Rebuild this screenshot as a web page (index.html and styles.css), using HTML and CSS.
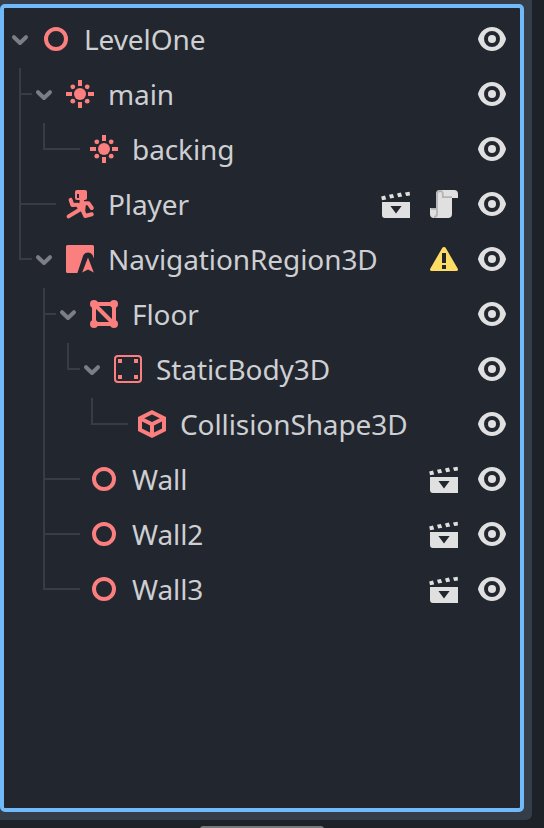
FILE: index.html
```html
<!DOCTYPE html>
<html lang="en">
<head>
<meta charset="utf-8">
<title>Scene</title>
<link rel="stylesheet" href="styles.css">
</head>
<body>
<svg class="defs" aria-hidden="true">
  <symbol id="arrow" viewBox="0 0 24 32"><path d="M6 14.2l6 5.8 6-5.8" fill="none" stroke="currentColor" stroke-width="4" stroke-linecap="round" stroke-linejoin="round"/></symbol>
  <symbol id="node" viewBox="0 0 16 16"><circle cx="8" cy="8" r="5" fill="none" stroke="currentColor" stroke-width="2"/></symbol>
  <symbol id="light" viewBox="0 0 16 16"><circle cx="8" cy="8" r="3"/><path d="M7 1h2v3H7zM7 12h2v3H7zM1 7h3v2H1zM12 7h3v2h-3z"/><circle cx="4.4" cy="4.400" r="1.200"/><circle cx="11.600" cy="4.400" r="1.200"/><circle cx="4.400" cy="11.600" r="1.200"/><circle cx="11.600" cy="11.600" r="1.200"/></symbol>
  <symbol id="character" viewBox="0 0 16 16"><path fill-rule="evenodd" d="M6.500 1h4a1 1 0 0 1 1 1v3a1 1 0 0 1-1 1h-4a1 1 0 0 1-1-1V2a1 1 0 0 1 1-1zM6.500 3v2h1V3z"/><path d="M3.300 5.900l.9 2.600 2.600-.1M9 7.600h3.200l1.700 2.400M8.200 10.600l-5.900 3.600M9.200 10.800l1.400 3.200 3.300-.9" fill="none" stroke="currentColor" stroke-width="2" stroke-linecap="round" stroke-linejoin="round"/><path d="M7.800 5.500h2.200v1.300l1 .8-.4 3.900-3.300-.5L6.200 9.300l1.600-2z"/></symbol>
  <symbol id="navigation" viewBox="0 0 16 16"><path d="M1.800 1h12.4a.8.8 0 0 1 .8.8v5.900l-.6-1.400C13.900 5.200 13 4.700 12 4.700s-1.900.5-2.400 1.600L6.700 15H1.800a.8.8 0 0 1-.8-.8V1.800A.8.8 0 0 1 1.800 1z"/><path d="M12 7.200l2.900 7.600L12 13.300l-2.900 1.500z"/></symbol>
  <symbol id="mesh" viewBox="0 0 16 16"><path d="M3 3h10v10H3zL13 13" fill="none" stroke="currentColor" stroke-width="2"/><circle cx="3" cy="3" r="2"/><circle cx="13" cy="3" r="2"/><circle cx="3" cy="13" r="2"/><circle cx="13" cy="13" r="2"/></symbol>
  <symbol id="body" viewBox="0 0 16 16"><rect x="1.5" y="1.5" width="13" height="13" rx="1.5" fill="none" stroke="currentColor"/><path d="M3 3h2v2H3zM11 3h2v2h-2zM3 11h2v2H3zM11 11h2v2h-2z"/></symbol>
  <symbol id="shape" viewBox="0 0 16 16"><path d="M8 2.100l6 3v5.800l-6 3-6-3V5.100zM2 5.100l6 3 6-3M8 8.100v5.800" fill="none" stroke="currentColor" stroke-width="2"/></symbol>
  <symbol id="eye" viewBox="0 0 16 16"><path fill-rule="evenodd" d="M8 2C4.900 2 2.100 4.200 1.100 7.500a1.500 1.500 0 0 0 0 1C2.100 11.800 4.900 14 8 14s5.900-2.200 6.900-5.500a1.500 1.500 0 0 0 0-1C13.900 4.200 11.100 2 8 2zM8 4a4 4 0 0 1 0 8 4 4 0 0 1 0-8z"/><circle cx="8" cy="8" r="2"/></symbol>
  <symbol id="scene" viewBox="0 0 16 16"><path fill-rule="evenodd" d="M1 7h14v8H2.500A1.500 1.500 0 0 1 1 13.500zM5.200 9L8 12.800 10.800 9z"/><path d="M.6 4.200l1.900-.4.600 1.900-2.100.4zM4.500 3.400l1.900-.4.700 1.900-2 .4zM8.500 2.700l1.900-.4.700 1.900-2 .4zM12.500 2.200l2.300-.3.200 1.800-1.900.3z"/></symbol>
  <symbol id="script" viewBox="0 0 16 16"><path d="M6 1h7a2 2 0 0 1 2 2v2h-3v8a2 2 0 0 1-2 2H3a2 2 0 0 1-2-2v-3h3V3a2 2 0 0 1 2-2z"/><path d="M1.400 10.400h2.900M4.500 10V3A1.500 1.500 0 0 1 6 1.500 1.300 1.300 0 0 1 7.400 3v1.600H12M4.500 10v3A1.500 1.500 0 0 1 3 14.500" fill="none" stroke="#b4b4b4" stroke-width=".9"/></symbol>
  <symbol id="warning" viewBox="0 0 16 16"><path fill-rule="evenodd" d="M8 2c.4 0 .7.200.9.500l6 10.400c.3.500 0 1.100-.6 1.100H1.700c-.6 0-.9-.6-.6-1.100l6-10.400c.2-.3.5-.5.9-.5zM7 5v5h2V5zM7 11v2h2v-2z"/></symbol>
</svg>
<main class="dock">
  <div class="panel">
    <ul class="tree">
      <li>
        <div class="row"><svg class="fold"><use href="#arrow"/></svg><svg class="icon"><use href="#node"/></svg><span class="name">LevelOne</span><svg class="action"><use href="#eye"/></svg></div>
        <ul class="children">
          <li>
            <div class="row"><svg class="fold"><use href="#arrow"/></svg><svg class="icon"><use href="#light"/></svg><span class="name">main</span><svg class="action"><use href="#eye"/></svg></div>
            <ul class="children">
              <li class="leaf"><div class="row"><span class="fold"></span><svg class="icon"><use href="#light"/></svg><span class="name">backing</span><svg class="action"><use href="#eye"/></svg></div></li>
            </ul>
          </li>
          <li class="leaf"><div class="row"><span class="fold"></span><svg class="icon"><use href="#character"/></svg><span class="name">Player</span><svg class="action"><use href="#scene"/></svg><svg class="action"><use href="#script"/></svg><svg class="action"><use href="#eye"/></svg></div></li>
          <li>
            <div class="row"><svg class="fold"><use href="#arrow"/></svg><svg class="icon"><use href="#navigation"/></svg><span class="name">NavigationRegion3D</span><svg class="action warn"><use href="#warning"/></svg><svg class="action"><use href="#eye"/></svg></div>
            <ul class="children">
              <li>
                <div class="row"><svg class="fold"><use href="#arrow"/></svg><svg class="icon"><use href="#mesh"/></svg><span class="name">Floor</span><svg class="action"><use href="#eye"/></svg></div>
                <ul class="children">
                  <li>
                    <div class="row"><svg class="fold"><use href="#arrow"/></svg><svg class="icon"><use href="#body"/></svg><span class="name">StaticBody3D</span><svg class="action"><use href="#eye"/></svg></div>
                    <ul class="children">
                      <li class="leaf"><div class="row"><span class="fold"></span><svg class="icon"><use href="#shape"/></svg><span class="name">CollisionShape3D</span><svg class="action"><use href="#eye"/></svg></div></li>
                    </ul>
                  </li>
                </ul>
              </li>
              <li class="leaf"><div class="row"><span class="fold"></span><svg class="icon"><use href="#node"/></svg><span class="name">Wall</span><svg class="action"><use href="#scene"/></svg><svg class="action"><use href="#eye"/></svg></div></li>
              <li class="leaf"><div class="row"><span class="fold"></span><svg class="icon"><use href="#node"/></svg><span class="name">Wall2</span><svg class="action"><use href="#scene"/></svg><svg class="action"><use href="#eye"/></svg></div></li>
              <li class="leaf"><div class="row"><span class="fold"></span><svg class="icon"><use href="#node"/></svg><span class="name">Wall3</span><svg class="action"><use href="#scene"/></svg><svg class="action"><use href="#eye"/></svg></div></li>
            </ul>
          </li>
        </ul>
      </li>
    </ul>
  </div>
</main>
<div class="grabber"></div>
</body>
</html>
```
FILE: styles.css
```css
* { box-sizing: border-box; }

body {
  margin: 0;
  height: 828px;
  overflow: hidden;
  background: #1d2229;
  font: 28px/55px "Noto Sans", sans-serif;
  letter-spacing: -0.09px;
  color: #cdcfd2;
}

.defs { display: none; }

.dock {
  width: 532px;
  height: 820px;
  padding: 4px 8px 8px 0;
  background: #363d4a;
  border-radius: 0 0 6px 0;
}

.panel {
  height: 808px;
  padding: 4px 12px 0 4px;
  border: 4px solid #70bafa;
  border-radius: 5px;
  background: #22262e;
}

.tree, .children {
  margin: 0;
  padding: 0;
  list-style: none;
}

.children { padding-left: 24px; }

.row {
  display: flex;
  align-items: center;
  height: 55px;
}

.fold {
  flex: none;
  width: 24px;
  height: 32px;
  margin: 0 8px 1px 0;
  color: #7b7e84;
}

.icon, .action {
  flex: none;
  width: 32px;
  height: 32px;
  margin-bottom: 1px;
  fill: currentColor;
}

.icon { color: #fc7f7f; }

.name {
  flex: 1;
  margin-left: 12px;
  white-space: nowrap;
}

.action {
  margin-left: 16px;
  color: #e0e0e0;
}

.warn { color: #ffdd65; }

/* Guide lines between a node and its children */
.children > li { position: relative; }

.children > li::before,
.children > li::after {
  content: "";
  position: absolute;
  left: -13px;
  background: #383c44;
}

.children > li::before {
  top: 0;
  width: 2px;
  height: 100%;
}

.children > li:first-child::before {
  top: 1px;
  height: calc(100% - 1px);
}

.children > li:last-child::before { height: 28px; }

.children > li:only-child::before { height: 27px; }

.children > li::after {
  top: 26px;
  width: 13px;
  height: 2px;
}

.children > .leaf::after { width: 37px; }

.grabber {
  width: 124px;
  height: 8px;
  margin: 6px 0 0 200px;
  border-radius: 3px;
  background: #77797c;
}
```
